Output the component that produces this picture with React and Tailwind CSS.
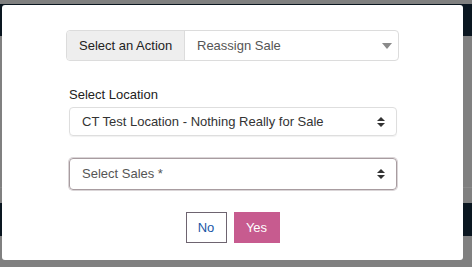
function Caret() {
  return (
    <svg width="10" height="6" viewBox="0 0 10 6" className="shrink-0">
      <path d="M0 0 H10 L5 6 Z" fill="#8a8a8a" />
    </svg>
  );
}

function UpDown() {
  return (
    <svg width="8" height="10" viewBox="0 0 8 10" className="shrink-0">
      <path d="M0 4 L4 0 L8 4 Z" fill="#333" />
      <path d="M0 6 H8 L4 10 Z" fill="#333" />
    </svg>
  );
}

function Modal() {
  return (
    <div className="absolute left-[2px] top-[5px] w-[461px] h-[255px] bg-white rounded-[3px] flex flex-col items-center pt-[25px]">
      {/* Action input group */}
      <div className="flex w-[333px] h-[31px] border border-[#dcdcdc] rounded-[4px] text-[13px]">
        <div className="w-[118px] shrink-0 bg-[#eeeeee] border-r border-[#dcdcdc] rounded-l-[4px] flex items-center pl-[12px] text-[#222]">
          Select an Action
        </div>
        <div className="flex-1 flex items-center justify-between pl-[12px] pr-[6px] text-[#555]">
          <span>Reassign Sale</span>
          <Caret />
        </div>
      </div>

      {/* Location */}
      <div className="w-[328px] self-start ml-[67px] mt-[25px] flex flex-col">
        <div className="text-[13px] leading-[18px] text-[#222]">Select Location</div>
        <div className="mt-[3px] h-[29px] border border-[#dedede] rounded-[4px] shadow-[0_1px_1px_rgba(0,0,0,0.06)] flex items-center justify-between pl-[12px] pr-[11px] text-[13px] text-[#333]">
          <span>CT Test Location - Nothing Really for Sale</span>
          <UpDown />
        </div>

        <div className="mt-[22px] h-[32px] border border-[#a89ca0] rounded-[4px] shadow-[0_0_0_1px_rgba(150,135,140,0.35)] flex items-center justify-between pl-[12px] pr-[11px] text-[13px] text-[#555]">
          <span>Select Sales *</span>
          <UpDown />
        </div>
      </div>

      {/* Buttons */}
      <div className="mt-[22px] flex gap-[7px] text-[13px]">
        <button className="w-[41px] h-[31px] border border-[#6e6470] bg-white text-[#1a56a6]">
          No
        </button>
        <button className="w-[46px] h-[31px] bg-[#c75b8f] text-white">
          Yes
        </button>
      </div>
    </div>
  );
}

export default function App() {
  return (
    <div className="relative w-[472px] h-[267px] overflow-hidden bg-[#808080] font-['Liberation_Sans',Arial,sans-serif]">
      {/* page behind overlay */}
      <div className="flex flex-col h-full">
        <div className="h-[4px]" />
        <div className="h-[32px] bg-[#0a1620]" />
        <div className="h-[151px]" />
        <div className="h-px bg-[#8a8a8a]" />
        <div className="h-[15px]" />
        <div className="h-[33px] bg-[#0a1620]" />
      </div>
      <Modal />
    </div>
  );
}
